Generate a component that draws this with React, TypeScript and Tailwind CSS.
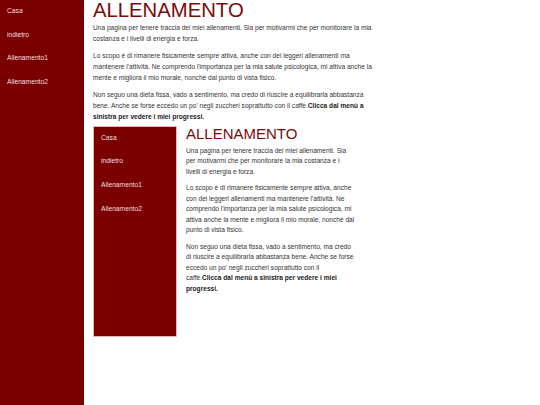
const menu = ['Casa', 'indietro', 'Allenamento1', 'Allenamento2'];

function Sidebar({ framed }: { framed?: boolean }) {
  return (
    <nav
      className={`w-[84px] shrink-0 bg-[#7a0000] pt-[5px] ${framed ? 'border border-[#f0b4b4]' : ''}`}
    >
      <ul className="flex flex-col">
        {menu.map((item) => (
          <li key={item} className="h-[23.7px] pl-[7px] text-[6.7px] leading-[12px] text-[#f6dede]">
            {item}
          </li>
        ))}
      </ul>
    </nav>
  );
}

function Text() {
  return (
    <>
      <p>
        Una pagina per tenere traccia dei miei allenamenti. Sia per motivarmi che per monitorare la
        mia costanza e i livelli di energia e forza.
      </p>
      <p className="mt-[6px]">
        Lo scopo è di rimanere fisicamente sempre attiva, anche con dei leggeri allenamenti ma
        mantenere l'attività. Ne comprendo l'importanza per la mia salute psicologica, mi attiva anche
        la mente e migliora il mio morale, nonchè dal punto di vista fisico.
      </p>
      <p className="mt-[6px]">
        Non seguo una dieta fissa, vado a sentimento, ma credo di riuscire a equilibrarla abbastanza
        bene. Anche se forse eccedo un po' negli zuccheri soprattutto con il caffè.
        <b className="font-bold text-[#222]">Clicca dal menù a sinistra per vedere i miei progressi.</b>
      </p>
    </>
  );
}

export default function App() {
  return (
    <div className="flex min-h-[405px] bg-white font-['Liberation_Sans',Arial,sans-serif]">
      <Sidebar />
      <main className="w-[296px] pl-[9px]">
        <h1 className="text-[20.3px] leading-none text-[#7a0a0a]">ALLENAMENTO</h1>
        <div className="mt-[1.5px] w-[282px] text-[6.6px] leading-[11px] text-[#333]">
          <Text />
        </div>
        <div className="mt-[4px] flex h-[211px] w-[285px]">
          <Sidebar framed />
          <div className="w-[184px] pl-[9px]">
            <h1 className="text-[15px] leading-none text-[#7a0a0a]">ALLENAMENTO</h1>
            <div className="mt-[5px] w-[169px] text-[6.6px] leading-[10.5px] text-[#333]">
              <Text />
            </div>
          </div>
        </div>
      </main>
    </div>
  );
}
